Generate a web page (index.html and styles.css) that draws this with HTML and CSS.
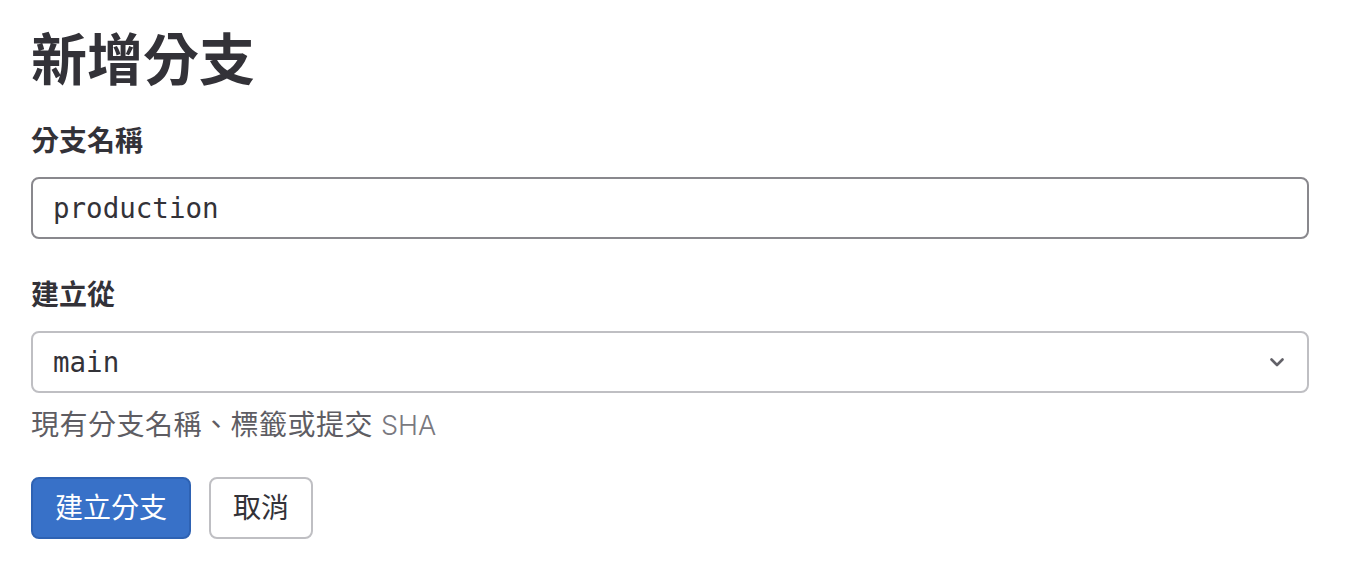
FILE: index.html
```html
<!DOCTYPE html>
<html lang="zh-Hant">
<head>
<meta charset="utf-8">
<title>新增分支</title>
<link rel="stylesheet" href="styles.css">
</head>
<body>
<main class="page">
  <h1 class="title">新增分支</h1>
  <form class="form">
    <div class="field">
      <label class="label" for="branch">分支名稱</label>
      <div class="input">production</div>
    </div>
    <div class="field field-from">
      <label class="label">建立從</label>
      <div class="select">
        <span class="select-value">main</span>
        <svg class="chevron" width="16" height="16" viewBox="0 0 16 16" aria-hidden="true">
          <polyline points="2.5,5.5 8,11 13.5,5.5" fill="none" stroke="#626168" stroke-width="2.6" stroke-linecap="round" stroke-linejoin="round"/>
        </svg>
      </div>
      <p class="help"><span class="cjk">現有分支名稱、標籤或提交</span> <span class="latin">SHA</span></p>
    </div>
    <div class="actions">
      <button type="button" class="btn btn-primary">建立分支</button>
      <button type="button" class="btn btn-default">取消</button>
    </div>
  </form>
</main>
</body>
</html>
```

FILE: styles.css
```css
html, body {
  margin: 0;
  padding: 0;
  background: #ffffff;
}

body {
  font-family: Inter, "Noto Sans CJK TC", "Noto Sans", sans-serif;
  color: #333238;
}

.page {
  padding: 25px 41px 0 31px;
}

.title {
  margin: 0;
  font-size: 56px;
  line-height: 70px;
  font-weight: 700;
  color: #333238;
}

.form {
  margin-top: 28px;
  display: flex;
  flex-direction: column;
}

.field {
  display: flex;
  flex-direction: column;
}

.field-from {
  margin-top: 38px;
}

.label {
  font-size: 28px;
  line-height: 36px;
  font-weight: 700;
  color: #333238;
  margin-bottom: 18px;
}

.input,
.select {
  box-sizing: border-box;
  height: 62px;
  border-radius: 8px;
  padding: 0 20px;
  display: flex;
  align-items: center;
  font-family: "DejaVu Sans Mono", "Liberation Mono", monospace;
  font-size: 27.5px;
  color: #333238;
}

.input {
  border: 2px solid #89888d;
}

.select {
  border: 2px solid #bfbfc3;
  justify-content: space-between;
  padding-right: 22px;
}

.chevron {
  width: 16px;
  height: 16px;
}

.help {
  margin: 14px 0 0;
  height: 36px;
  font-size: 28px;
  line-height: 36px;
  color: #5e5d63;
}

.cjk {
  letter-spacing: 0.5px;
}

.latin {
  font-size: 27px;
  line-height: 1;
  font-weight: 300;
  color: #7a7980;
}

.actions {
  margin-top: 34px;
  display: flex;
  gap: 18px;
}

.btn {
  box-sizing: border-box;
  height: 62px;
  padding: 0 22px;
  border-radius: 8px;
  font-family: Inter, "Noto Sans CJK TC", sans-serif;
  font-size: 28px;
  line-height: 36px;
  font-weight: 400;
  cursor: pointer;
}

.btn-primary {
  background: #3871c8;
  color: #ffffff;
  border: 2px solid #2e62b3;
}

.btn-default {
  background: #ffffff;
  color: #333238;
  border: 2px solid #bfbfc3;
}
```
